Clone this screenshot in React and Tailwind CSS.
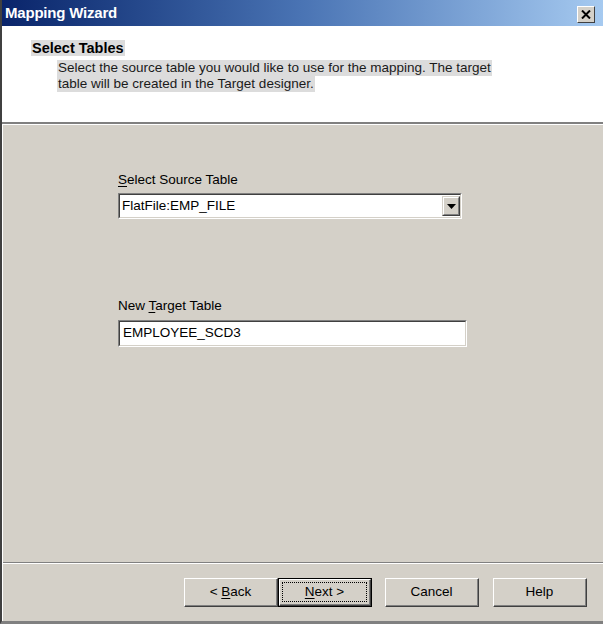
import React from "react";

const font = { fontFamily: '"Liberation Sans", Arial, sans-serif' };

function U({ children }) {
  return <span className="underline underline-offset-2">{children}</span>;
}

function Btn({ children, def }) {
  return (
    <div className={`h-[29px] w-[94px] ${def ? "border border-black" : ""}`}>
      <div className="h-full w-full border-t border-l border-white border-r border-b border-r-[#404040] border-b-[#404040] bg-[#d4d0c8]">
        <div className="h-full w-full border-r border-b border-[#808080] border-t-0 border-l-0 flex items-center justify-center p-[3px]">
          <div className={`w-full h-full flex items-center justify-center text-[13.5px] text-black ${def ? "outline-1 outline-dotted outline-black" : ""}`}>
            <span className="whitespace-pre">{children}</span>
          </div>
        </div>
      </div>
    </div>
  );
}

export default function App() {
  return (
    <div className="w-[603px] h-[624px] bg-[#d4d0c8] flex flex-col overflow-hidden border-l-2 border-l-[#404040] border-b-[3px] border-b-[#808080]" style={font}>
      {/* Title bar */}
      <div className="h-[26px] shrink-0 flex items-center justify-between pl-[3px] pr-[8px] bg-gradient-to-r from-[#0a246a] via-[#4a74b4] to-[#a6caf0]">
        <span className="text-white font-bold text-[15px] tracking-[-0.2px]">Mapping Wizard</span>
        <div className="w-[18px] h-[17px] mt-[2px] bg-[#d4d0c8] border-t border-l border-white border-r border-b border-r-[#404040] border-b-[#404040] flex items-center justify-center">
          <svg width="10" height="9" viewBox="0 0 10 9">
            <path d="M1 0.5 L9 8.5 M9 0.5 L1 8.5" stroke="black" strokeWidth="2" />
          </svg>
        </div>
      </div>
      {/* Header */}
      <div className="h-[96px] shrink-0 bg-white border-l-2 border-l-white pl-[27px] pt-[14px]">
        <div className="w-fit bg-[#dcdcdc] px-[1px] font-bold text-[14.5px] leading-[16px] text-black">Select Tables</div>
        <div className="ml-[26px] mt-[4px] text-[13.5px] leading-[16px] text-[#1a1a1a]">
          <div className="w-fit bg-[#dcdcdc] px-[1px]">
            Select the source table you would like to use for the mapping. The target
          </div>
          <div className="w-fit bg-[#dcdcdc] px-[1px]">table will be created in the Target designer.</div>
        </div>
      </div>
      <div className="h-[2px] shrink-0 bg-[#808080]" />
      <div className="h-[1px] shrink-0 bg-white" />
      {/* Body */}
      <div className="flex-1 border-l border-l-white flex flex-col">
        <div className="flex-1 pl-[115px] pt-[47px]">
          <div className="text-[13.5px] leading-[16px] text-black">
            <U>S</U>elect Source Table
          </div>
          <div className="mt-[5px] w-[344px] h-[26px] border-t border-l border-[#808080] border-r border-b border-r-white border-b-white">
            <div className="w-full h-full border-t border-l border-[#404040] border-r border-b border-r-[#d4d0c8] border-b-[#d4d0c8] bg-white flex items-center justify-between">
              <span className="pl-[2px] text-[13.5px] text-black">FlatFile:EMP_FILE</span>
              <div className="w-[18px] h-[20px] bg-[#d4d0c8] border-t border-l border-[#d4d0c8] border-r border-b border-r-[#404040] border-b-[#404040]">
                <div className="w-full h-full border-t border-l border-white border-r border-b border-r-[#808080] border-b-[#808080] flex items-center justify-center">
                  <svg width="9" height="5" viewBox="0 0 9 5">
                    <path d="M0 0 H9 L4.5 5 Z" fill="black" />
                  </svg>
                </div>
              </div>
            </div>
          </div>
          <div className="mt-[79px] text-[13.5px] leading-[16px] text-black">
            New <U>T</U>arget Table
          </div>
          <div className="mt-[6px] w-[349px] h-[27px] border-t border-l border-[#808080] border-r border-b border-r-white border-b-white">
            <div className="w-full h-full border-t border-l border-[#404040] border-r border-b border-r-[#d4d0c8] border-b-[#d4d0c8] bg-white flex items-center">
              <span className="pl-[3px] text-[13.5px] text-black">EMPLOYEE_SCD3</span>
            </div>
          </div>
        </div>
        <div className="h-[1px] shrink-0 bg-[#808080]" />
        <div className="h-[1px] shrink-0 bg-white" />
        <div className="h-[57px] shrink-0 flex items-start pt-[14px] pl-[181px]">
          <Btn>&lt; <U>B</U>ack</Btn>
          <Btn def>
            <U>N</U>ext &gt;
          </Btn>
          <div className="w-[13px]" />
          <Btn>Cancel</Btn>
          <div className="w-[14px]" />
          <Btn>Help</Btn>
        </div>
      </div>
    </div>
  );
}
